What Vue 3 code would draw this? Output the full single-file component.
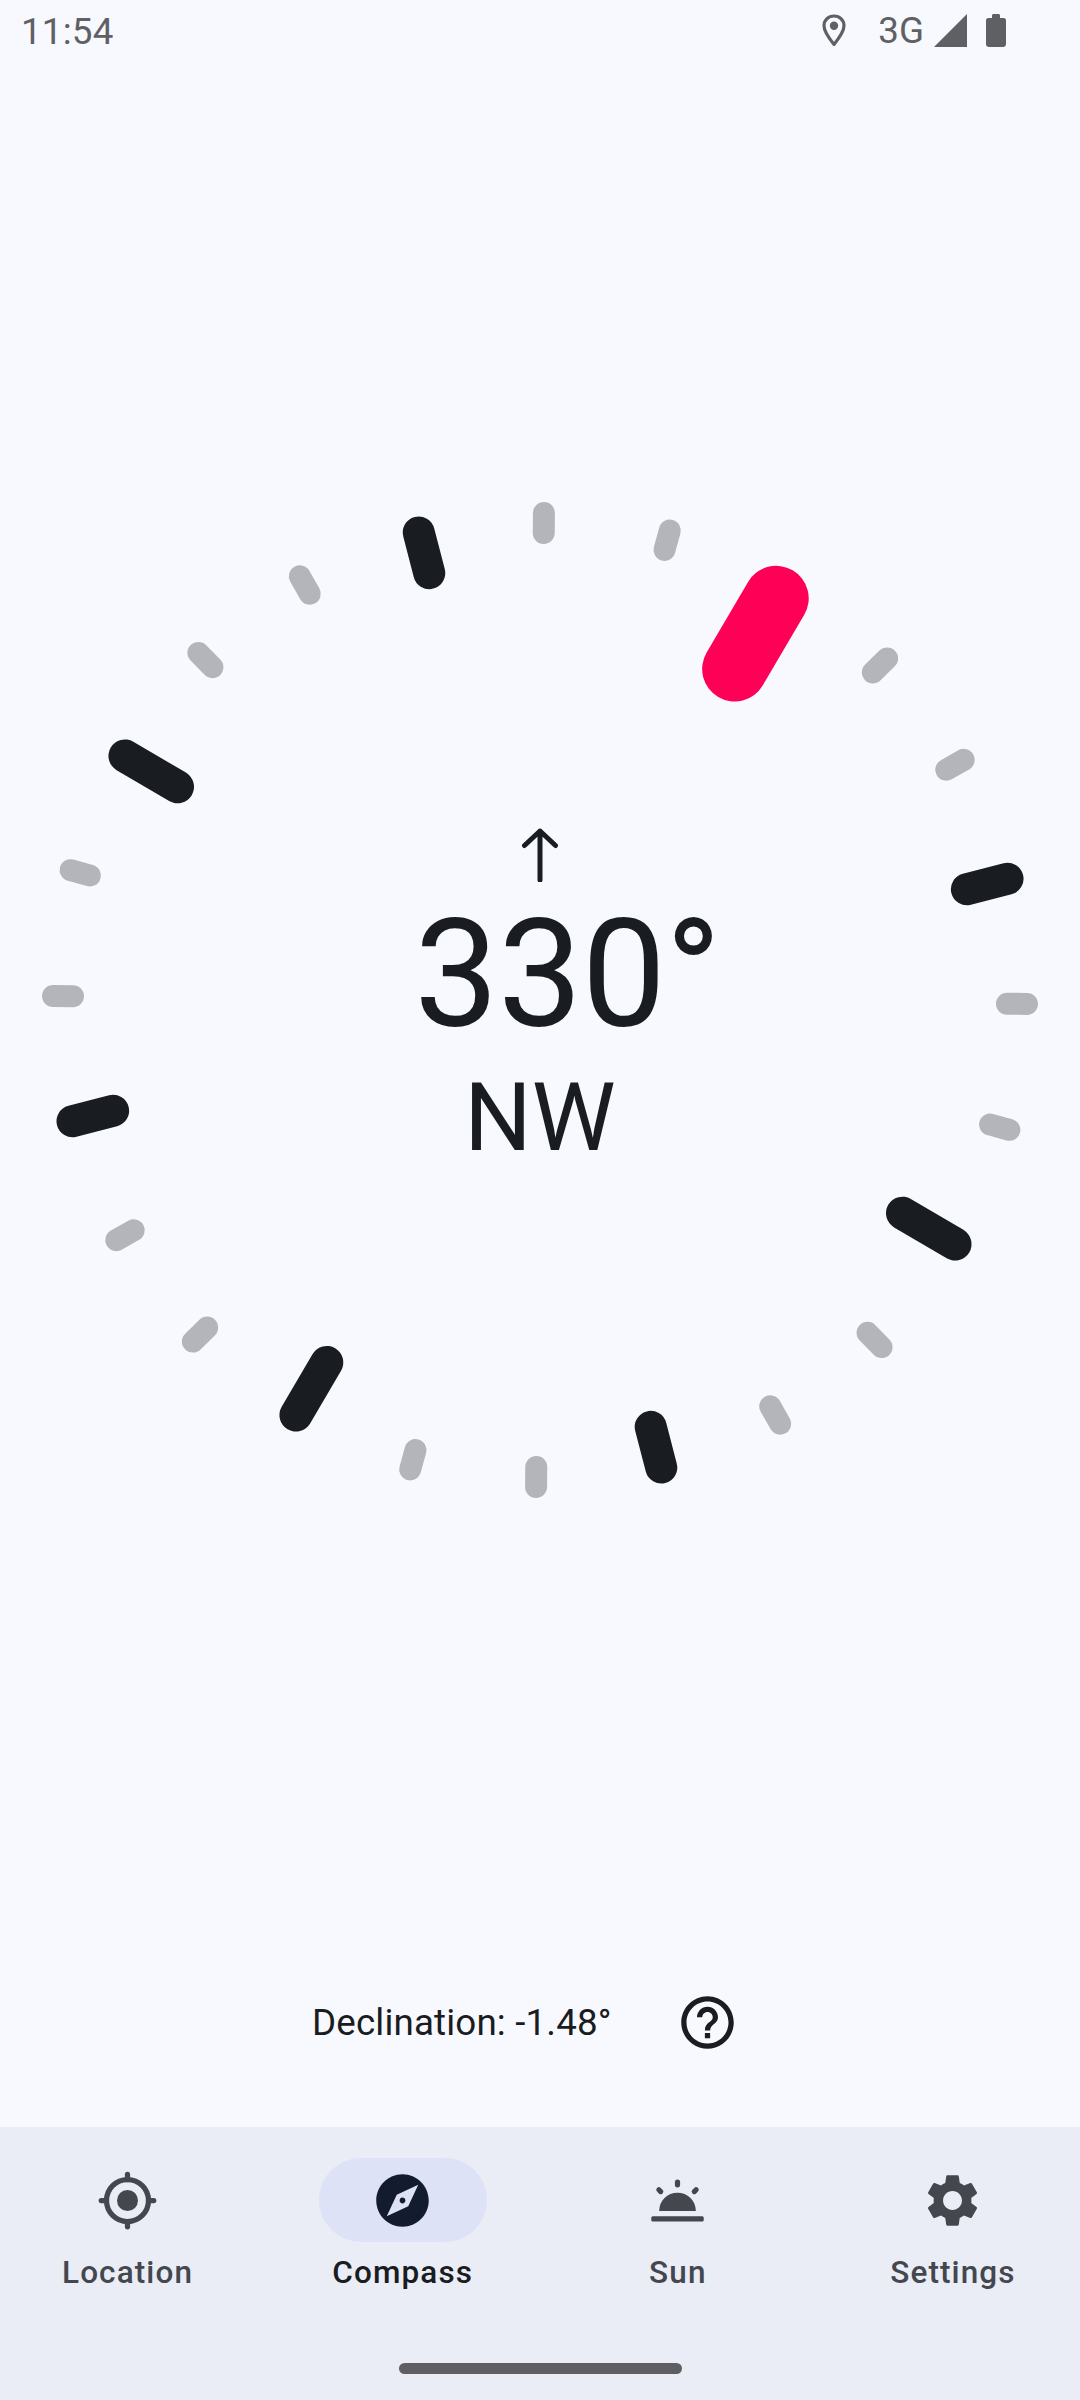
<template>
  <div class="screen">
    <div class="status">
      <span class="time">11:54</span>
      <div class="status-right">
        <svg class="pin" viewBox="0 0 24 33" width="24" height="33">
          <path d="M12 2C6.200 2 2 6.400 2 11.600 2 17.600 7 24.400 12 30.400 17 24.400 22 17.600 22 11.600 22 6.400 17.800 2 12 2Z" fill="none" stroke="#5f6064" stroke-width="3.200" stroke-linejoin="round" />
          <circle cx="12" cy="11.800" r="4.200" fill="#5f6064" />
        </svg>
        <span class="net">3G</span>
        <svg class="signal" viewBox="0 0 33 33" width="33" height="33">
          <path d="M0 33 33 0V33Z" fill="#5f6064" />
        </svg>
        <svg class="battery" viewBox="0 0 20 33" width="20" height="33">
          <path d="M6 4V1.500C6 .7 6.700 0 7.500 0h5c.8 0 1.500.7 1.500 1.500V4h3.500C19 4 20 5 20 6.500V30c0 1.700-1.300 3-3 3H3c-1.700 0-3-1.300-3-3V6.500C0 5 1 4 2.500 4Z" fill="#5f6064" />
        </svg>
      </div>
    </div>

    <main class="main">
      <div class="dial">
        <span v-for="t in ticks" :key="t.deg" class="tick" :class="t.kind" :style="{ transform: t.transform }"></span>
        <div class="reading">
          <svg class="arrow" viewBox="0 0 40 56" width="40" height="56">
            <path d="M20 54V5M4.500 19.500 20 5 35.500 19.500" fill="none" stroke="#191c20" stroke-width="5" stroke-linecap="round" stroke-linejoin="round" />
          </svg>
          <div class="degrees">330°</div>
          <div class="direction">NW</div>
        </div>
      </div>
    </main>

    <div class="declination">
      <span class="decl-text">Declination: -1.48°</span>
      <svg viewBox="0 0 24 24" width="63" height="63">
        <path fill="#191c20" d="M11 18h2v-2h-2v2zm1-16C6.480 2 2 6.480 2 12s4.480 10 10 10 10-4.480 10-10S17.520 2 12 2zm0 18c-4.410 0-8-3.590-8-8s3.590-8 8-8 8 3.590 8 8-3.590 8-8 8zm0-14c-2.210 0-4 1.790-4 4h2c0-1.100.9-2 2-2s2 .9 2 2c0 2-3 1.750-3 5h2c0-2.250 3-2.500 3-5 0-2.210-1.790-4-4-4z" />
      </svg>
    </div>

    <nav class="nav">
      <div class="items">
        <div class="item">
          <div class="icon-wrap">
            <svg viewBox="0 0 24 24" width="63" height="63" fill="none" stroke="#44474e" stroke-width="2" stroke-linecap="round">
              <circle cx="12" cy="12" r="8" />
              <circle cx="12" cy="12" r="4" fill="#44474e" stroke="none" />
              <path d="M12 2v2M12 20v2M2 12h2M20 12h2" />
            </svg>
          </div>
          <span class="label">Location</span>
        </div>
        <div class="item active">
          <div class="icon-wrap">
            <svg viewBox="0 0 24 24" width="63" height="63">
              <path fill="#131b2e" d="M12 10.900c-.61 0-1.100.49-1.100 1.100s.49 1.100 1.100 1.100c.61 0 1.100-.49 1.100-1.100s-.49-1.100-1.100-1.100zM12 2C6.480 2 2 6.480 2 12s4.480 10 10 10 10-4.480 10-10S17.520 2 12 2zm2.190 12.190L6 18l3.810-8.190L18 6l-3.810 8.190z" />
            </svg>
          </div>
          <span class="label">Compass</span>
        </div>
        <div class="item">
          <div class="icon-wrap">
            <svg viewBox="0 0 24 24" width="63" height="63" fill="#44474e">
              <path d="M5 16a7 7 0 0 1 14 0Z" />
              <rect x="2" y="18" width="20" height="2" rx=".6" />
              <path d="M12 5v1M4.900 7.900l.7.7M19.100 7.900l-.7.7" fill="none" stroke="#44474e" stroke-width="2" stroke-linecap="round" />
            </svg>
          </div>
          <span class="label">Sun</span>
        </div>
        <div class="item">
          <div class="icon-wrap">
            <svg viewBox="0 0 24 24" width="63" height="63">
              <path fill="#44474e" d="M19.140 12.940c.04-.3.06-.61.06-.94 0-.32-.02-.64-.07-.94l2.030-1.580c.18-.14.23-.41.12-.61l-1.920-3.320c-.12-.22-.37-.29-.59-.22l-2.390.96c-.5-.38-1.030-.7-1.620-.94L14.400 2.810c-.04-.24-.24-.41-.48-.41h-3.840c-.24 0-.43.17-.47.41L9.250 5.350c-.59.24-1.130.57-1.620.94l-2.390-.96c-.22-.08-.47 0-.59.22L2.740 8.870c-.12.21-.08.47.12.61l2.030 1.580c-.05.3-.09.63-.09.94s.02.64.07.94l-2.030 1.580c-.18.14-.23.41-.12.61l1.920 3.320c.12.22.37.29.59.22l2.390-.96c.5.38 1.030.7 1.620.94l.36 2.540c.05.24.24.41.48.41h3.840c.24 0 .44-.17.47-.41l.36-2.540c.59-.24 1.130-.56 1.620-.94l2.390.96c.22.08.47 0 .59-.22l1.920-3.320c.12-.22.07-.47-.12-.61l-2.010-1.580zM12 15.600c-1.980 0-3.600-1.620-3.600-3.600s1.620-3.600 3.600-3.600 3.600 1.620 3.600 3.600-1.620 3.600-3.600 3.600z" />
            </svg>
          </div>
          <span class="label">Settings</span>
        </div>
      </div>
      <div class="home-bar"></div>
    </nav>
  </div>
</template>

<script setup>
// heading is 330, so north sits 30 degrees clockwise of the top
const offset = 0.46
const radius = { minor: 477, major: 462, cardinal: 451, north: 425 }

const ticks = Array.from({ length: 24 }, (_, i) => {
  const deg = i * 15
  const fromNorth = (deg - 30 + 360) % 360
  let kind = 'minor'
  if (fromNorth === 0) kind = 'north'
  else if (fromNorth % 90 === 0) kind = 'cardinal'
  else if (fromNorth % 45 === 0) kind = 'major'
  return {
    deg,
    kind,
    transform: `translate(-50%, -50%) rotate(${deg + offset}deg) translateY(-${radius[kind]}px)`
  }
})
</script>

<style>
html,
body {
  margin: 0;
  background: #f8f9ff;
}
</style>

<style scoped>
.screen {
  width: 1080px;
  height: 2400px;
  display: flex;
  flex-direction: column;
  background: #f8f9ff;
  font-family: Roboto, "Liberation Sans", sans-serif;
  color: #191c20;
  overflow: hidden;
}

.status {
  height: 63px;
  display: flex;
  align-items: center;
  justify-content: space-between;
  padding: 0 74px 0 21px;
  box-sizing: border-box;
  color: #5f6064;
}

.time {
  font-size: 36.75px;
  line-height: 63px;
  letter-spacing: .2px;
}

.status-right {
  display: flex;
  align-items: center;
  height: 33px;
  margin-top: -2px;
}

.net {
  font-size: 36.75px;
  line-height: 33px;
  margin-left: 32px;
  margin-right: 10px;
}

.battery {
  margin-left: 19px;
}

.main {
  padding-top: 437px;
  display: flex;
  justify-content: center;
}

.dial {
  position: relative;
  width: 1000px;
  height: 1000px;
  display: flex;
  align-items: center;
  justify-content: center;
}

.tick {
  position: absolute;
  left: 50%;
  top: 50%;
  border-radius: 40px;
}

.tick.minor {
  width: 22px;
  height: 42px;
  background: #b3b5ba;
}

.tick.major {
  width: 32px;
  height: 74px;
  background: #191c20;
}

.tick.cardinal {
  width: 33px;
  height: 94px;
  background: #191c20;
}

.tick.north {
  width: 65px;
  height: 147px;
  background: #ff0057;
}

.reading {
  display: flex;
  flex-direction: column;
  align-items: center;
  margin-top: -2px;
}

.arrow {
  display: block;
}

.degrees {
  font-size: 150px;
  line-height: 176px;
  letter-spacing: -.66px;
  padding-left: 55px;
  margin-top: 5px;
}

.direction {
  font-size: 94.5px;
  line-height: 110px;
  margin-top: 0;
}

.declination {
  position: relative;
  margin-top: 491px;
  display: flex;
  align-items: center;
  height: 63px;
  padding-left: 312px;
}

.decl-text {
  font-size: 36.75px;
  letter-spacing: .15px;
  width: 364px;
}

.nav {
  margin-top: auto;
  height: 273px;
  background: #eaedf6;
  display: flex;
  flex-direction: column;
  align-items: center;
}

.items {
  width: 100%;
  display: flex;
  gap: 21px;
  padding-top: 31px;
  padding-left: .5px;
  box-sizing: border-box;
}

.item {
  flex: 1;
  display: flex;
  flex-direction: column;
  align-items: center;
}

.icon-wrap {
  width: 168px;
  height: 84px;
  border-radius: 42px;
  display: flex;
  align-items: center;
  justify-content: center;
}

.active .icon-wrap {
  background: #dde2f7;
}

.label {
  margin-top: 10px;
  font-size: 31.5px;
  line-height: 42px;
  font-weight: 500;
  letter-spacing: 1.1px;
  color: #44474e;
}

.active .label {
  color: #191c20;
}

.home-bar {
  width: 283px;
  height: 11px;
  border-radius: 6px;
  background: #5f5f63;
  margin-top: auto;
  margin-bottom: 26px;
}
</style>
